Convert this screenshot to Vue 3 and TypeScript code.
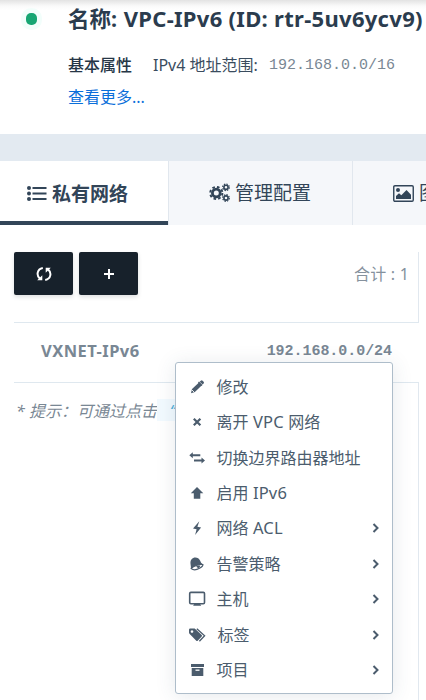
<script setup lang="ts">
interface MenuItem {
  icon: string
  label: string
  children?: boolean
}

const items: MenuItem[] = [
  { icon: 'pencil', label: '修改' },
  { icon: 'close', label: '离开 VPC 网络' },
  { icon: 'swap', label: '切换边界路由器地址' },
  { icon: 'up', label: '启用 IPv6' },
  { icon: 'bolt', label: '网络 ACL', children: true },
  { icon: 'bell', label: '告警策略', children: true },
  { icon: 'display', label: '主机', children: true },
  { icon: 'tags', label: '标签', children: true },
  { icon: 'archive', label: '项目', children: true },
]
</script>

<template>
  <div class="page">
    <header class="summary">
      <i class="status"></i>
      <div class="info">
        <h1>名称: <span class="title-latin">VPC-IPv6 (ID: rtr-5uv6ycv9)</span></h1>
        <div class="attrs">
          <b>基本属性</b>
          <span class="range">IPv4 地址范围:</span>
          <code>192.168.0.0/16</code>
        </div>
        <a class="more">查看更多...</a>
      </div>
    </header>

    <nav class="tabs">
      <div class="tab active">
        <svg width="20" height="16" viewBox="0 0 20 16" fill="currentColor">
          <circle cx="2" cy="2" r="2" /><circle cx="2" cy="7.5" r="2" /><circle cx="2" cy="13" r="2" />
          <path d="M5.5 1h14v2h-14zM5.5 6.5h14v2h-14zM5.5 12h14v2h-14z" />
        </svg>
        <span>私有网络</span>
      </div>
      <div class="tab manage">
        <svg width="22" height="20" viewBox="0 0 22 20" fill="none" stroke="currentColor">
          <circle cx="7.3" cy="10" r="3.9" stroke-width="2.8" />
          <circle cx="7.3" cy="10" r="6.1" stroke-width="1.9" stroke-dasharray="2.6 2.19" />
          <circle cx="17" cy="4.3" r="2.1" stroke-width="1.6" />
          <circle cx="17" cy="4.3" r="3.3" stroke-width="1.2" stroke-dasharray="1.45 1.14" />
          <circle cx="17" cy="15" r="2.1" stroke-width="1.6" />
          <circle cx="17" cy="15" r="3.3" stroke-width="1.2" stroke-dasharray="1.45 1.14" />
        </svg>
        <span>管理配置</span>
      </div>
      <div class="tab graph">
        <svg width="21" height="17" viewBox="0 0 21 17">
          <rect x=".75" y=".75" width="19.5" height="15.5" rx="1.2" fill="none" stroke="currentColor" stroke-width="1.4" />
          <circle cx="5" cy="5" r="2" fill="currentColor" />
          <path d="M3 14v-3l3-2.7 2.3 2L13.5 5l4.5 4.8V14z" fill="currentColor" />
        </svg>
        <span>图</span>
      </div>
    </nav>

    <main class="content">
      <section class="toolbar">
        <button type="button">
          <svg width="16" height="16" viewBox="0 0 16 16" fill="none" stroke="currentColor" stroke-width="2">
            <path d="M6.8 2C.8 3.1.2 9.6 4 12.8M9.2 14c6-1.1 6.6-7.6 2.8-10.8" />
            <path d="M6.3 9.2v5.1H1.2zM9.7 6.8V1.7h5.1z" fill="currentColor" stroke="none" />
          </svg>
        </button>
        <button type="button">
          <svg width="12" height="12" viewBox="0 0 12 12" fill="none" stroke="currentColor" stroke-width="2">
            <path d="M6 1v10M1 6h10" />
          </svg>
        </button>
        <span class="total">合计 : 1</span>
      </section>
      <section class="row">
        <b class="name">VXNET-IPv6</b>
        <b class="cidr">192.168.0.0/24</b>
      </section>
      <section class="hint">
        <em>* 提示：可通过点击</em><em class="quote">“</em>
      </section>
    </main>

    <ul class="menu">
      <li v-for="item in items" :key="item.icon">
        <svg class="icon" width="18" height="18" viewBox="0 0 18 18" fill="currentColor">
          <g v-if="item.icon === 'pencil'">
            <path d="M3 15.2l1-4.1 7-6.7 2.9 2.9-7 6.8zM11.7 3.7l1.1-1q1-.8 1.8 0l1 1q.9.9 0 1.8l-1 1z" />
            <path d="M10.5 4l3.5 3.5" stroke="currentColor" stroke-width="1.5" />
            <path d="M4 12l2 2" stroke="#fff" stroke-width=".9" />
          </g>
          <path v-else-if="item.icon === 'close'" d="M5.8 5.7l6.6 6.6M12.4 5.7l-6.6 6.6" fill="none" stroke="currentColor" stroke-width="2.2" />
          <path v-else-if="item.icon === 'swap'" d="M1.3 6.2l3.5-3v2H12.3v2H4.8V9.2zM17 11.6l-3.5-3v2H6v2h7.5v2z" />
          <path v-else-if="item.icon === 'up'" d="M9 3l6.3 6.3h-3v5.5H5.8V9.3h-3z" />
          <path v-else-if="item.icon === 'bolt'" d="M11.3 2.3L5 9.5l3.6.8-1.5 5.8 6-7.6-3.7-.8z" />
          <g v-else-if="item.icon === 'bell'">
            <path d="M2.8 13.6C3.4 10.4 1.2 7 3.6 4.2c2.6-2.9 7.3-1.7 8.6 1.6.6 1.5.9 2.6 2.9 3.6z" />
            <path d="M3.2 13.6c1.8 1.5 5.5 1.3 8.3-.3 2.3-1.3 3.6-2.6 3.4-3.8-4-.4-9.4 1.2-11.7 4.1z" fill="#fff" stroke="currentColor" stroke-width="1.2" />
            <path d="M8.2 11.3l3.3-1.1q1.3 1.8-.4 2.6-1.9.7-2.9-1.5z" />
          </g>
          <g v-else-if="item.icon === 'display'">
            <rect x="1.7" y="2.4" width="14.8" height="11.3" rx="1.2" fill="none" stroke="currentColor" stroke-width="1.6" />
            <path d="M6.5 13.5h5.3l1.4 2.3H5.1z" />
          </g>
          <g v-else-if="item.icon === 'tags'">
            <path fill-rule="evenodd" d="M1 3.7Q1 2.5 2.2 2.5h4.5l7 6.5q.7.7 0 1.4l-4 4.3q-.7.7-1.4 0L1.7 8Q1 7.3 1 6.5zM4 4.2a1.3 1.3 0 1 0 .01 0z" />
            <path d="M8.8 2.8l7.8 6.9-5.2 5.5" fill="none" stroke="currentColor" stroke-width="1.3" />
          </g>
          <g v-else>
            <path d="M3 3h13v3H3zM3.7 7h11.6v8H3.7z" />
            <path d="M7.5 9.2h4" stroke="#fff" stroke-width="1.3" />
          </g>
        </svg>
        <span :class="{ tag: item.icon === 'tags' }">
          <span v-for="(part, i) in item.label.split(/([A-Za-z0-9]+)/)" :key="i" :class="{ latin: i % 2 === 1 }">{{ part }}</span>
        </span>
        <svg v-if="item.children" class="arrow" width="8" height="10" viewBox="0 0 8 10">
          <path d="M1.5 1l4 4-4 4" fill="none" stroke="currentColor" stroke-width="2" />
        </svg>
      </li>
    </ul>
  </div>
</template>

<style>
body {
  margin: 0;
  overflow: hidden;
}
</style>

<style scoped>
* {
  box-sizing: border-box;
}
.page {
  position: relative;
  width: 426px;
  height: 700px;
  overflow: hidden;
  display: flex;
  flex-direction: column;
  background: #fff;
  color: #3a4c5e;
  font-family: "Noto Sans", "Noto Sans CJK SC", sans-serif;
  font-size: 16px;
  line-height: 24px;
  white-space: nowrap;
}
.summary {
  height: 134px;
  flex: none;
  display: flex;
  padding-left: 26px;
  background: linear-gradient(#e3e3e3, #fafafa 6px, #fff 10px);
}
.status {
  flex: none;
  width: 11px;
  height: 12px;
  margin: 13px 31px 0 0;
  border-radius: 5px;
  background: #17a673;
  box-shadow: 0 0 0 5px #f2fefb;
}
h1 {
  height: 30px;
  margin: 3px 0 0;
  font-size: 21.5px;
  line-height: 30px;
  font-weight: 700;
  color: #2b3c4e;
}
.title-latin {
  margin-left: 1px;
  font-size: 22px;
  letter-spacing: 0.3px;
}
.attrs {
  height: 24px;
  display: flex;
  margin-top: 20px;
}
.attrs b {
  width: 85px;
  font-weight: 500;
  color: #263646;
}
.range {
  width: 116px;
}
code {
  padding-top: 1px;
  font-family: "Liberation Mono", monospace;
  font-size: 15px;
  color: #798794;
}
.more {
  display: block;
  margin-top: 8px;
  color: #0b6fda;
}
.tabs {
  height: 91px;
  flex: none;
  display: flex;
  border-top: 27px solid #e3eaf1;
  background: #f5f7fa;
  color: #324558;
  font-size: 19px;
}
.tab {
  flex: none;
  display: flex;
  align-items: center;
  border-right: 1px solid #e1e7ee;
}
.active {
  width: 169px;
  gap: 5px;
  padding: 1px 0 0 27px;
  background: linear-gradient(#324558, #324558) bottom / 100% 4px no-repeat #fff;
  font-weight: 700;
}
.manage {
  width: 184px;
  gap: 4px;
  padding-left: 40px;
}
.graph {
  width: 160px;
  gap: 5px;
  padding-left: 40px;
}
.content {
  flex: 1;
  display: flex;
  flex-direction: column;
  padding: 27px 7px 0 14px;
}
.toolbar {
  height: 71px;
  flex: none;
  display: flex;
  gap: 6px;
  border-right: 1px solid #e1e8ef;
  border-bottom: 1px solid #dfe8ef;
}
button {
  width: 59px;
  height: 43px;
  display: flex;
  align-items: center;
  justify-content: center;
  padding: 0;
  border: 0;
  border-radius: 2px;
  background: #17212b;
  color: #fff;
  box-shadow: 0 2px 4px #17212b25;
}
.total {
  margin: 10px 9px 0 auto;
  letter-spacing: 0.2px;
  color: #85919d;
}
.row {
  height: 60px;
  flex: none;
  display: flex;
  align-items: center;
  justify-content: space-between;
  padding: 0 27px 2px;
  border-bottom: 1px solid #dfe8ef;
  color: #798794;
}
.name {
  margin-top: -2px;
  font-size: 16.5px;
  letter-spacing: 0.45px;
}
.cidr {
  padding-top: 1px;
  font-family: "Liberation Mono", monospace;
  font-size: 15px;
  letter-spacing: -0.05px;
}
.hint {
  flex: 1;
  padding: 16px 0 0 2px;
  border-right: 1px solid #e1e8ef;
  color: #798794;
}
.quote {
  display: inline-block;
  height: 22px;
  padding-left: 13px;
  background: #f2faff;
  color: #4daed8;
}
.menu {
  position: absolute;
  left: 175px;
  top: 362px;
  width: 218px;
  height: 332px;
  margin: 0;
  padding: 6px 0 6px 12px;
  list-style: none;
  border: 1px solid #aebdca;
  border-radius: 3px;
  background: #fff;
  box-shadow: 0 2px 20px #344f6920;
  color: #4b5c6d;
}
.menu li {
  display: flex;
  align-items: center;
  height: 35.45px;
}
.icon {
  margin-right: 10.5px;
}
.tag {
  padding-left: 1px;
}
.latin {
  margin: 0 0.3px;
  font-size: 16.5px;
  letter-spacing: 0.15px;
}
.arrow {
  margin: 0 12px 0 auto;
}
</style>
